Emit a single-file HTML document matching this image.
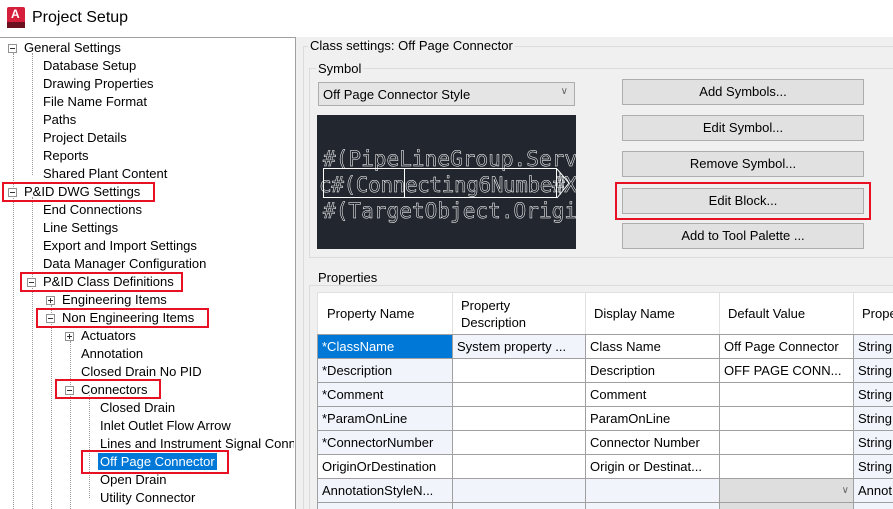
<!DOCTYPE html>
<html><head><meta charset="utf-8"><style>
*{margin:0;padding:0;box-sizing:border-box}
html{overflow:hidden;width:893px;height:509px}
body{width:893px;height:509px;overflow:hidden;background:#f0f0f0;font-family:"Liberation Sans",Arial,sans-serif;font-size:13px;color:#000;position:relative}
.a{position:absolute;white-space:nowrap}
.t{position:absolute;white-space:nowrap;line-height:18px;height:18px}
.box{position:absolute;width:9px;height:9px;border:1px solid #919191;background:#fff}
.box:before{content:"";position:absolute;left:1px;top:3px;width:5px;height:1px;background:#333}
.plus:after{content:"";position:absolute;left:3px;top:1px;width:1px;height:5px;background:#333}
.vl{position:absolute;width:0;border-left:1px dotted #999}
.red{position:absolute;border:2px solid #e81123}
.btn{position:absolute;left:622px;width:242px;height:26px;background:#e1e1e1;border:1px solid #adadad;text-align:center;line-height:24px}
table{position:absolute;left:317px;top:292px;border-collapse:collapse;background:#fff}
td{border:1px solid #a0a0a0;height:24px;padding:0 4px;white-space:nowrap;overflow:hidden}
th{border:1px solid #e0e0e0;border-bottom:1px solid #a0a0a0;font-weight:normal;text-align:left;padding:0 8px;height:42px;background:#fff;line-height:17px}
.b{background:#f1f5fb}
</style></head><body>
<div class="a" style="left:0;top:0;width:893px;height:37px;background:#fff"></div>
<div class="a" style="left:7px;top:7px;width:18px;height:21px;background:#d6203b;border-radius:2px"></div>
<div class="a" style="left:11px;top:7px;color:#fff;font-weight:bold;font-size:12px">A</div>
<div class="a" style="left:7px;top:22px;width:18px;height:6px;background:#6b1020"></div>
<div class="a" style="left:32px;top:9px;font-size:16px">Project Setup</div>
<div class="a" style="left:0;top:37px;width:296px;height:472px;background:#fff;border-right:1px solid #a0a0a0;border-top:1px solid #a0a0a0"></div>
<div class="vl" style="left:13px;top:53px;height:456px"></div>
<div class="vl" style="left:32px;top:197px;height:312px"></div>
<div class="vl" style="left:32px;top:53px;height:122px"></div>
<div class="vl" style="left:51px;top:305px;height:204px"></div>
<div class="vl" style="left:70px;top:341px;height:168px"></div>
<div class="vl" style="left:89px;top:395px;height:103px"></div>
<div class="box" style="left:8px;top:44px"></div>
<div class="box" style="left:8px;top:188px"></div>
<div class="box" style="left:27px;top:278px"></div>
<div class="box plus" style="left:46px;top:296px"></div>
<div class="box" style="left:46px;top:314px"></div>
<div class="box plus" style="left:65px;top:332px"></div>
<div class="box" style="left:65px;top:386px"></div>
<div class="t" style="left:24px;top:39px">General Settings</div>
<div class="t" style="left:43px;top:57px">Database Setup</div>
<div class="t" style="left:43px;top:75px">Drawing Properties</div>
<div class="t" style="left:43px;top:93px">File Name Format</div>
<div class="t" style="left:43px;top:111px">Paths</div>
<div class="t" style="left:43px;top:129px">Project Details</div>
<div class="t" style="left:43px;top:147px">Reports</div>
<div class="t" style="left:43px;top:165px">Shared Plant Content</div>
<div class="t" style="left:24px;top:183px">P&amp;ID DWG Settings</div>
<div class="t" style="left:43px;top:201px">End Connections</div>
<div class="t" style="left:43px;top:219px">Line Settings</div>
<div class="t" style="left:43px;top:237px">Export and Import Settings</div>
<div class="t" style="left:43px;top:255px">Data Manager Configuration</div>
<div class="t" style="left:43px;top:273px">P&amp;ID Class Definitions</div>
<div class="t" style="left:62px;top:291px">Engineering Items</div>
<div class="t" style="left:62px;top:309px">Non Engineering Items</div>
<div class="t" style="left:81px;top:327px">Actuators</div>
<div class="t" style="left:81px;top:345px">Annotation</div>
<div class="t" style="left:81px;top:363px">Closed Drain No PID</div>
<div class="t" style="left:81px;top:381px">Connectors</div>
<div class="t" style="left:100px;top:399px">Closed Drain</div>
<div class="t" style="left:100px;top:417px">Inlet Outlet Flow Arrow</div>
<div class="t" style="left:100px;top:435px;width:194px;overflow:hidden">Lines and Instrument Signal Connectors</div>
<div class="t" style="left:98px;top:453px;background:#0078d7;color:#fff;padding:0 2px;height:17px;line-height:17px">Off Page Connector</div>
<div class="t" style="left:100px;top:471px">Open Drain</div>
<div class="t" style="left:100px;top:489px">Utility Connector</div>
<div class="red" style="left:2px;top:182px;width:153px;height:20px"></div>
<div class="red" style="left:20px;top:272px;width:163px;height:20px"></div>
<div class="red" style="left:36px;top:308px;width:173px;height:20px"></div>
<div class="red" style="left:55px;top:379px;width:106px;height:20px"></div>
<div class="red" style="left:81px;top:450px;width:148px;height:24px"></div>
<div class="a" style="left:303px;top:46px;width:600px;height:470px;border:1px solid #dcdcdc"></div>
<div class="a" style="left:308px;top:38px;background:#f0f0f0;padding:0 2px">Class settings: Off Page Connector</div>
<div class="a" style="left:309px;top:68px;width:600px;height:190px;border:1px solid #dcdcdc"></div>
<div class="a" style="left:316px;top:61px;background:#f0f0f0;padding:0 2px">Symbol</div>
<div class="a" style="left:318px;top:82px;width:257px;height:24px;background:#e5e5e5;border:1px solid #adadad;padding:4px 0 0 4px">Off Page Connector Style<span style="position:absolute;right:6px;top:3px;color:#666;font-size:10px">&#8744;</span></div>
<svg class="a" style="left:317px;top:115px" width="259" height="134"><rect width="259" height="134" fill="#22272f"/>
<g font-family="DejaVu Sans Mono,monospace" font-size="21" fill="none" stroke="#fff" stroke-width="0.5">
<text x="6" y="51" textLength="254">#(PipeLineGroup.Serv</text>
<text x="2" y="77" textLength="258">c#(Connecting6Numbe#X</text>
<text x="6" y="103" textLength="254">#(TargetObject.Origi</text></g>
<g fill="none" stroke="#fff" stroke-width="1"><rect x="6.5" y="53.5" width="233" height="29"/><line x1="87.5" y1="54" x2="87.5" y2="83"/><path d="M240 54 L252 68 L240 83 M243 57V80 M246 61V76"/></g></svg>
<div class="btn" style="top:79px">Add Symbols...</div>
<div class="btn" style="top:115px">Edit Symbol...</div>
<div class="btn" style="top:151px">Remove Symbol...</div>
<div class="btn" style="top:188px">Edit Block...</div>
<div class="btn" style="top:223px">Add to Tool Palette ...</div>
<div class="red" style="left:615px;top:182px;width:256px;height:38px"></div>
<div class="a" style="left:309px;top:285px;width:600px;height:230px;border:1px solid #dcdcdc"></div>
<div class="a" style="left:316px;top:270px;background:#f0f0f0;padding:0 2px">Properties</div>
<div class="a" style="left:317px;top:292px;width:580px;height:220px;background:#fff;border:1px solid #a0a0a0"></div>
<table style="width:600px;table-layout:fixed">
<col style="width:135px"><col style="width:133px"><col style="width:134px"><col style="width:134px"><col style="width:64px">
<tr><th style="padding-left:9px">Property Name</th><th>Property<br>Description</th><th>Display Name</th><th>Default Value</th><th>Prope</th></tr>
<tr><td style="background:#0078d7;color:#fff">*ClassName</td><td class="b">System property ...</td><td>Class Name</td><td>Off Page Connector</td><td class="b">String</td></tr>
<tr><td class="b">*Description</td><td></td><td>Description</td><td>OFF PAGE CONN...</td><td class="b">String</td></tr>
<tr><td class="b">*Comment</td><td></td><td>Comment</td><td></td><td class="b">String</td></tr>
<tr><td class="b">*ParamOnLine</td><td></td><td>ParamOnLine</td><td></td><td class="b">String</td></tr>
<tr><td class="b">*ConnectorNumber</td><td></td><td>Connector Number</td><td></td><td class="b">String</td></tr>
<tr><td>OriginOrDestination</td><td></td><td>Origin or Destinat...</td><td></td><td class="b">String</td></tr>
<tr><td class="b">AnnotationStyleN...</td><td class="b"></td><td class="b"></td><td style="background:#dedede;text-align:right;color:#666;font-size:10px">&#8744;</td><td class="b">Annot</td></tr>
<tr><td class="b"></td><td class="b"></td><td class="b"></td><td style="background:#dedede"></td><td class="b"></td></tr>
</table>
</body></html>
